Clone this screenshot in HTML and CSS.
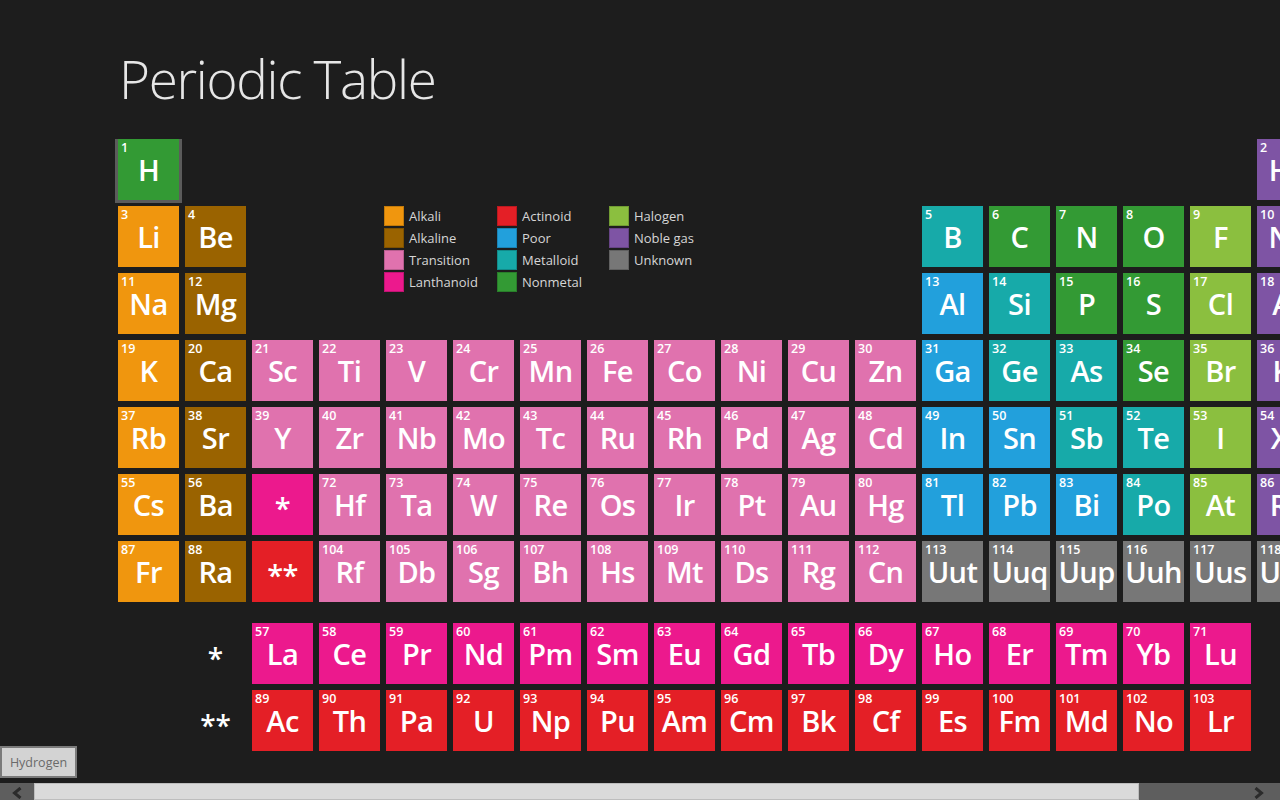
FILE: index.html
```html
<!DOCTYPE html>
<html lang="en">
<head>
<meta charset="utf-8">
<title>Periodic Table</title>
<link rel="stylesheet" href="styles.css">
</head>
<body>
<div class="app">
  <header class="header"><h1 class="title">Periodic Table</h1></header>
  <main class="board">
    <div class="ptable">
      <div class="legend">
        <div class="lg"><span class="sw c-alk"></span>Alkali</div>
        <div class="lg"><span class="sw c-act"></span>Actinoid</div>
        <div class="lg"><span class="sw c-hal"></span>Halogen</div>
        <div class="lg"><span class="sw c-ear"></span>Alkaline</div>
        <div class="lg"><span class="sw c-poor"></span>Poor</div>
        <div class="lg"><span class="sw c-nob"></span>Noble gas</div>
        <div class="lg"><span class="sw c-tr"></span>Transition</div>
        <div class="lg"><span class="sw c-met"></span>Metalloid</div>
        <div class="lg"><span class="sw c-unk"></span>Unknown</div>
        <div class="lg"><span class="sw c-lan"></span>Lanthanoid</div>
        <div class="lg"><span class="sw c-non"></span>Nonmetal</div>
      </div>

      <div class="el c-non selected"><span class="n">1</span><span class="s">H</span></div>
      <div class="empty"></div><div class="empty"></div><div class="empty"></div><div class="empty"></div>
      <div class="empty"></div><div class="empty"></div><div class="empty"></div><div class="empty"></div>
      <div class="empty"></div><div class="empty"></div><div class="empty"></div><div class="empty"></div>
      <div class="empty"></div><div class="empty"></div><div class="empty"></div><div class="empty"></div>
      <div class="el c-nob"><span class="n">2</span><span class="s">He</span></div>

      <div class="el c-alk"><span class="n">3</span><span class="s">Li</span></div>
      <div class="el c-ear"><span class="n">4</span><span class="s">Be</span></div>
      <div class="el c-met"><span class="n">5</span><span class="s">B</span></div>
      <div class="el c-non"><span class="n">6</span><span class="s">C</span></div>
      <div class="el c-non"><span class="n">7</span><span class="s">N</span></div>
      <div class="el c-non"><span class="n">8</span><span class="s">O</span></div>
      <div class="el c-hal"><span class="n">9</span><span class="s">F</span></div>
      <div class="el c-nob"><span class="n">10</span><span class="s">Ne</span></div>

      <div class="el c-alk"><span class="n">11</span><span class="s">Na</span></div>
      <div class="el c-ear"><span class="n">12</span><span class="s">Mg</span></div>
      <div class="el c-poor"><span class="n">13</span><span class="s">Al</span></div>
      <div class="el c-met"><span class="n">14</span><span class="s">Si</span></div>
      <div class="el c-non"><span class="n">15</span><span class="s">P</span></div>
      <div class="el c-non"><span class="n">16</span><span class="s">S</span></div>
      <div class="el c-hal"><span class="n">17</span><span class="s">Cl</span></div>
      <div class="el c-nob"><span class="n">18</span><span class="s">Ar</span></div>

      <div class="el c-alk"><span class="n">19</span><span class="s">K</span></div>
      <div class="el c-ear"><span class="n">20</span><span class="s">Ca</span></div>
      <div class="el c-tr"><span class="n">21</span><span class="s">Sc</span></div>
      <div class="el c-tr"><span class="n">22</span><span class="s">Ti</span></div>
      <div class="el c-tr"><span class="n">23</span><span class="s">V</span></div>
      <div class="el c-tr"><span class="n">24</span><span class="s">Cr</span></div>
      <div class="el c-tr"><span class="n">25</span><span class="s">Mn</span></div>
      <div class="el c-tr"><span class="n">26</span><span class="s">Fe</span></div>
      <div class="el c-tr"><span class="n">27</span><span class="s">Co</span></div>
      <div class="el c-tr"><span class="n">28</span><span class="s">Ni</span></div>
      <div class="el c-tr"><span class="n">29</span><span class="s">Cu</span></div>
      <div class="el c-tr"><span class="n">30</span><span class="s">Zn</span></div>
      <div class="el c-poor"><span class="n">31</span><span class="s">Ga</span></div>
      <div class="el c-met"><span class="n">32</span><span class="s">Ge</span></div>
      <div class="el c-met"><span class="n">33</span><span class="s">As</span></div>
      <div class="el c-non"><span class="n">34</span><span class="s">Se</span></div>
      <div class="el c-hal"><span class="n">35</span><span class="s">Br</span></div>
      <div class="el c-nob"><span class="n">36</span><span class="s">Kr</span></div>

      <div class="el c-alk"><span class="n">37</span><span class="s">Rb</span></div>
      <div class="el c-ear"><span class="n">38</span><span class="s">Sr</span></div>
      <div class="el c-tr"><span class="n">39</span><span class="s">Y</span></div>
      <div class="el c-tr"><span class="n">40</span><span class="s">Zr</span></div>
      <div class="el c-tr"><span class="n">41</span><span class="s">Nb</span></div>
      <div class="el c-tr"><span class="n">42</span><span class="s">Mo</span></div>
      <div class="el c-tr"><span class="n">43</span><span class="s">Tc</span></div>
      <div class="el c-tr"><span class="n">44</span><span class="s">Ru</span></div>
      <div class="el c-tr"><span class="n">45</span><span class="s">Rh</span></div>
      <div class="el c-tr"><span class="n">46</span><span class="s">Pd</span></div>
      <div class="el c-tr"><span class="n">47</span><span class="s">Ag</span></div>
      <div class="el c-tr"><span class="n">48</span><span class="s">Cd</span></div>
      <div class="el c-poor"><span class="n">49</span><span class="s">In</span></div>
      <div class="el c-poor"><span class="n">50</span><span class="s">Sn</span></div>
      <div class="el c-met"><span class="n">51</span><span class="s">Sb</span></div>
      <div class="el c-met"><span class="n">52</span><span class="s">Te</span></div>
      <div class="el c-hal"><span class="n">53</span><span class="s">I</span></div>
      <div class="el c-nob"><span class="n">54</span><span class="s">Xe</span></div>

      <div class="el c-alk"><span class="n">55</span><span class="s">Cs</span></div>
      <div class="el c-ear"><span class="n">56</span><span class="s">Ba</span></div>
      <div class="el c-lan ref"><span class="s">*</span></div>
      <div class="el c-tr"><span class="n">72</span><span class="s">Hf</span></div>
      <div class="el c-tr"><span class="n">73</span><span class="s">Ta</span></div>
      <div class="el c-tr"><span class="n">74</span><span class="s">W</span></div>
      <div class="el c-tr"><span class="n">75</span><span class="s">Re</span></div>
      <div class="el c-tr"><span class="n">76</span><span class="s">Os</span></div>
      <div class="el c-tr"><span class="n">77</span><span class="s">Ir</span></div>
      <div class="el c-tr"><span class="n">78</span><span class="s">Pt</span></div>
      <div class="el c-tr"><span class="n">79</span><span class="s">Au</span></div>
      <div class="el c-tr"><span class="n">80</span><span class="s">Hg</span></div>
      <div class="el c-poor"><span class="n">81</span><span class="s">Tl</span></div>
      <div class="el c-poor"><span class="n">82</span><span class="s">Pb</span></div>
      <div class="el c-poor"><span class="n">83</span><span class="s">Bi</span></div>
      <div class="el c-met"><span class="n">84</span><span class="s">Po</span></div>
      <div class="el c-hal"><span class="n">85</span><span class="s">At</span></div>
      <div class="el c-nob"><span class="n">86</span><span class="s">Rn</span></div>

      <div class="el c-alk"><span class="n">87</span><span class="s">Fr</span></div>
      <div class="el c-ear"><span class="n">88</span><span class="s">Ra</span></div>
      <div class="el c-act ref"><span class="s">**</span></div>
      <div class="el c-tr"><span class="n">104</span><span class="s">Rf</span></div>
      <div class="el c-tr"><span class="n">105</span><span class="s">Db</span></div>
      <div class="el c-tr"><span class="n">106</span><span class="s">Sg</span></div>
      <div class="el c-tr"><span class="n">107</span><span class="s">Bh</span></div>
      <div class="el c-tr"><span class="n">108</span><span class="s">Hs</span></div>
      <div class="el c-tr"><span class="n">109</span><span class="s">Mt</span></div>
      <div class="el c-tr"><span class="n">110</span><span class="s">Ds</span></div>
      <div class="el c-tr"><span class="n">111</span><span class="s">Rg</span></div>
      <div class="el c-tr"><span class="n">112</span><span class="s">Cn</span></div>
      <div class="el c-unk"><span class="n">113</span><span class="s">Uut</span></div>
      <div class="el c-unk"><span class="n">114</span><span class="s">Uuq</span></div>
      <div class="el c-unk"><span class="n">115</span><span class="s">Uup</span></div>
      <div class="el c-unk"><span class="n">116</span><span class="s">Uuh</span></div>
      <div class="el c-unk"><span class="n">117</span><span class="s">Uus</span></div>
      <div class="el c-unk"><span class="n">118</span><span class="s">Uuo</span></div>
    </div>

    <div class="ptable fblock">
      <div class="empty"></div>
      <div class="mark">*</div>
      <div class="el c-lan"><span class="n">57</span><span class="s">La</span></div>
      <div class="el c-lan"><span class="n">58</span><span class="s">Ce</span></div>
      <div class="el c-lan"><span class="n">59</span><span class="s">Pr</span></div>
      <div class="el c-lan"><span class="n">60</span><span class="s">Nd</span></div>
      <div class="el c-lan"><span class="n">61</span><span class="s">Pm</span></div>
      <div class="el c-lan"><span class="n">62</span><span class="s">Sm</span></div>
      <div class="el c-lan"><span class="n">63</span><span class="s">Eu</span></div>
      <div class="el c-lan"><span class="n">64</span><span class="s">Gd</span></div>
      <div class="el c-lan"><span class="n">65</span><span class="s">Tb</span></div>
      <div class="el c-lan"><span class="n">66</span><span class="s">Dy</span></div>
      <div class="el c-lan"><span class="n">67</span><span class="s">Ho</span></div>
      <div class="el c-lan"><span class="n">68</span><span class="s">Er</span></div>
      <div class="el c-lan"><span class="n">69</span><span class="s">Tm</span></div>
      <div class="el c-lan"><span class="n">70</span><span class="s">Yb</span></div>
      <div class="el c-lan"><span class="n">71</span><span class="s">Lu</span></div>
      <div class="empty"></div>

      <div class="empty"></div>
      <div class="mark">**</div>
      <div class="el c-act"><span class="n">89</span><span class="s">Ac</span></div>
      <div class="el c-act"><span class="n">90</span><span class="s">Th</span></div>
      <div class="el c-act"><span class="n">91</span><span class="s">Pa</span></div>
      <div class="el c-act"><span class="n">92</span><span class="s">U</span></div>
      <div class="el c-act"><span class="n">93</span><span class="s">Np</span></div>
      <div class="el c-act"><span class="n">94</span><span class="s">Pu</span></div>
      <div class="el c-act"><span class="n">95</span><span class="s">Am</span></div>
      <div class="el c-act"><span class="n">96</span><span class="s">Cm</span></div>
      <div class="el c-act"><span class="n">97</span><span class="s">Bk</span></div>
      <div class="el c-act"><span class="n">98</span><span class="s">Cf</span></div>
      <div class="el c-act"><span class="n">99</span><span class="s">Es</span></div>
      <div class="el c-act"><span class="n">100</span><span class="s">Fm</span></div>
      <div class="el c-act"><span class="n">101</span><span class="s">Md</span></div>
      <div class="el c-act"><span class="n">102</span><span class="s">No</span></div>
      <div class="el c-act"><span class="n">103</span><span class="s">Lr</span></div>
      <div class="empty"></div>
    </div>
  </main>

  <button class="tip" type="button">Hydrogen</button>

  <div class="hscroll">
    <div class="sb-btn">
      <svg width="10" height="12" viewBox="0 0 10 12"><polyline points="8.5,1 2.5,6 8.5,11" fill="none" stroke="#2b2b2b" stroke-width="3"/></svg>
    </div>
    <div class="sb-thumb"></div>
    <div class="sb-track"></div>
    <div class="sb-btn sb-right">
      <svg width="10" height="12" viewBox="0 0 10 12"><polyline points="1.5,1 7.5,6 1.5,11" fill="none" stroke="#2b2b2b" stroke-width="3"/></svg>
    </div>
  </div>
</div>
</body>
</html>
```

FILE: styles.css
```css
* { box-sizing: border-box; }

html, body {
  margin: 0;
  padding: 0;
  background: #1d1d1d;
  height: 800px;
  overflow: hidden;
}

.app {
  position: relative;
  width: 1280px;
  height: 800px;
  display: flex;
  flex-direction: column;
  font-family: "Open Sans", "Segoe UI", sans-serif;
  color: #fff;
}

.header {
  height: 139px;
  flex: none;
  padding: 52px 0 0 119px;
}

.title {
  margin: 0;
  font-family: "Open Sans", sans-serif;
  font-weight: 300;
  font-size: 53px;
  line-height: 1;
  color: #e6e6e6;
  letter-spacing: -1.3px;
}

.board {
  flex: 1;
  min-height: 0;
  overflow: hidden;
  padding-left: 118px;
}

.ptable {
  display: grid;
  grid-template-columns: repeat(18, 61px);
  grid-auto-rows: 61px;
  gap: 6px;
  width: 1200px;
}

.fblock { margin-top: 21px; }

.legend {
  grid-column: 3 / 13;
  grid-row: 2 / 4;
  padding-left: 132px;
  display: grid;
  grid-template-columns: 113px 112px 100px;
  grid-auto-rows: 20px;
  row-gap: 2px;
  align-content: start;
  grid-auto-flow: row;
}

.lg {
  display: flex;
  align-items: center;
  gap: 5px;
  font-size: 13px;
  color: #d6d6d6;
  white-space: nowrap;
}

.sw {
  width: 20px;
  height: 20px;
  flex: none;
  box-shadow: inset 0 0 0 1px rgba(0,0,0,0.18);
}

.el {
  display: flex;
  flex-direction: column;
  color: #fff;
}

.el .n {
  font-size: 12.5px;
  font-weight: 600;
  line-height: 14px;
  padding: 2px 0 0 3px;
  height: 16px;
}

.el .s {
  font-size: 29px;
  font-weight: 600;
  line-height: 30px;
  text-align: center;
  letter-spacing: -0.6px;
  white-space: nowrap;
}

.el.ref {
  justify-content: center;
  align-items: center;
}

.el.ref .s { padding-top: 6px; }

.selected {
  outline: 3px solid #5b5b5b;
  outline-offset: 0;
}

.mark {
  display: flex;
  align-items: center;
  justify-content: center;
  font-size: 28px;
  font-weight: 600;
  padding-top: 8px;
  color: #fff;
}

.c-alk  { background: #f0960e; }
.c-ear  { background: #9a6300; }
.c-tr   { background: #e072ae; }
.c-lan  { background: #ec198d; }
.c-act  { background: #e41f26; }
.c-poor { background: #22a0dc; }
.c-met  { background: #17aaa9; }
.c-non  { background: #339a34; }
.c-hal  { background: #8bbf3f; }
.c-nob  { background: #7e54a4; }
.c-unk  { background: #777777; }

.tip {
  position: absolute;
  left: 0;
  bottom: 22px;
  width: 77px;
  height: 32px;
  margin: 0;
  padding: 0;
  background: #d3d3d3;
  border: 2px solid #7b7b7b;
  color: #6a6a6a;
  font-family: "Open Sans", sans-serif;
  font-size: 12.5px;
}

.hscroll {
  flex: none;
  height: 17px;
  display: flex;
  background: #5e5e5e;
}

.sb-btn {
  width: 34px;
  flex: none;
  display: flex;
  align-items: center;
  justify-content: center;
  padding-top: 2px;
}

.sb-right { width: 45px; justify-content: flex-start; padding-left: 19px; }

.sb-thumb {
  width: 1105px;
  flex: none;
  background: #dadada;
  border: 1px solid #bdbdbd;
}

.sb-track { flex: 1; }
```
